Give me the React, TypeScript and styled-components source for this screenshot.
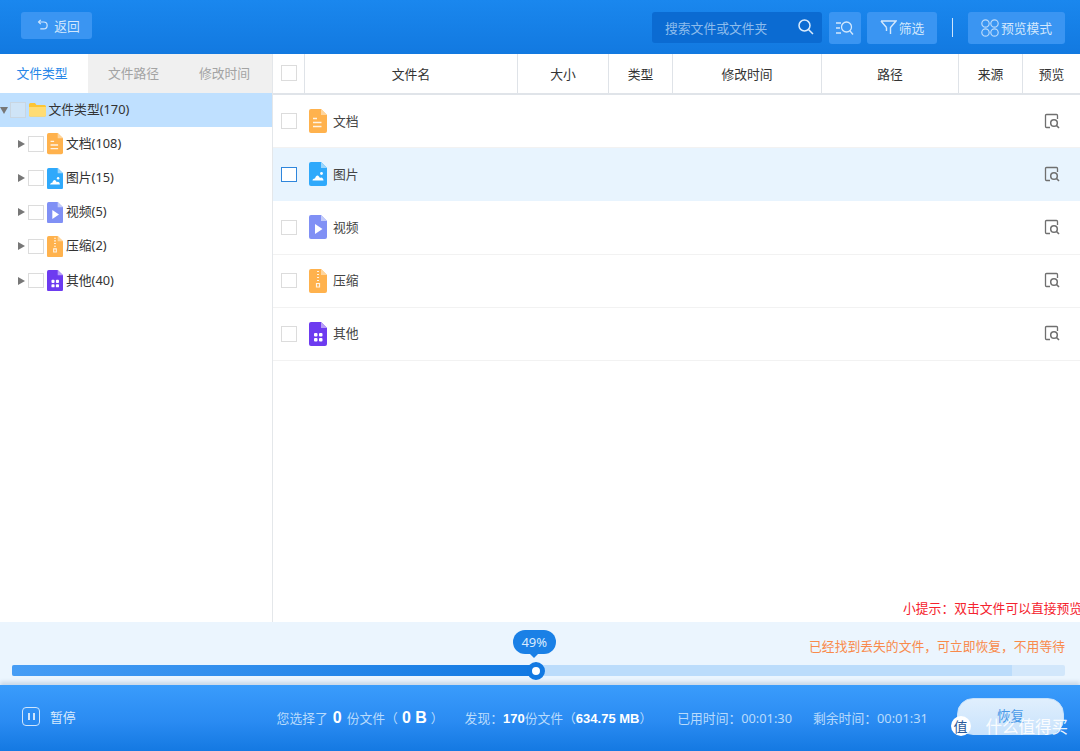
import React from "react"
import styled, { createGlobalStyle } from "styled-components"

const GlobalStyle = createGlobalStyle`
  html, body {
    margin: 0;
    padding: 0;
    background: #fff;
    font-family: "Noto Sans", "Noto Sans CJK SC", sans-serif;
  }
  * { box-sizing: border-box; }
`

type FileKind = "doc" | "image" | "video" | "zip" | "other"

const fileColors: Record<FileKind, [string, string]> = {
  doc: ["#ffb24d", "#ffd59c"],
  image: ["#2fa9fb", "#9ad6fd"],
  video: ["#8090f5", "#c3cbfa"],
  zip: ["#ffb24d", "#ffd59c"],
  other: ["#6d3bf0", "#b79df7"],
}

const FileIcon = ({ kind, size }: { kind: FileKind; size: number }) => {
  const [main, fold] = fileColors[kind]
  return (
    <svg width={size} height={(size * 24) / 18} viewBox="0 0 18 24">
      <path d="M2 0h10l6 6v16a2 2 0 0 1-2 2H2a2 2 0 0 1-2-2V2a2 2 0 0 1 2-2z" fill={main} />
      <path d="M12 0l6 6h-6z" fill={fold} />
      {kind === "doc" && (
        <path d="M4 9.500h4M4 13.500h8.500M4 17.500h8.500" stroke="#fff" strokeWidth="1.500" opacity=".85" />
      )}
      {kind === "image" && (
        <>
          <circle cx="12.500" cy="11.500" r="1.400" fill="#fff" />
          <path d="M3.500 18.500c0-1.500 1.500-2 2.500-2 .5-2 1.500-3 2.500-3s2 1.500 2.500 2.500l1-.5c1.500 0 2.500 1.500 2.500 3z" fill="#fff" />
        </>
      )}
      {kind === "video" && <path d="M6 9l7.500 5L6 19z" fill="#fff" />}
      {kind === "zip" && (
        <path
          d="M8 2.500h2M8 5.500h2M8 8.500h2M8 11.500h2M7.500 14.500h3v3.500h-3z"
          stroke="#fff"
          strokeWidth="1.200"
          fill="none"
          opacity=".85"
        />
      )}
      {kind === "other" && (
        <g fill="#fff">
          <rect x="5" y="11" width="3.500" height="3.500" rx="1" />
          <rect x="10" y="11" width="3.500" height="3.500" rx="1" />
          <rect x="5" y="16" width="3.500" height="3.500" rx="1" />
          <rect x="10" y="16" width="3.500" height="3.500" rx="1" />
        </g>
      )}
    </svg>
  )
}

const FolderIcon = () => (
  <svg width="17" height="14" viewBox="0 0 17 14">
    <path d="M0 1.500A1.500 1.500 0 0 1 1.500 0H6l1.500 2h8A1.500 1.500 0 0 1 17 3.500V12a1.500 1.500 0 0 1-1.500 1.500h-14A1.500 1.500 0 0 1 0 12z" fill="#fdc536" />
    <path d="M0 4h17v8a1.500 1.500 0 0 1-1.500 1.500h-14A1.500 1.500 0 0 1 0 12z" fill="#ffdc74" />
  </svg>
)

const PreviewIcon = () => (
  <svg width="17" height="17" viewBox="0 0 17 17" fill="none" stroke="#6f6f6f">
    <path d="M6 14.500H2.500a1 1 0 0 1-1-1v-11a1 1 0 0 1 1-1h10a1 1 0 0 1 1 1V6" strokeWidth="1.300" />
    <circle cx="10" cy="10" r="3.300" strokeWidth="1.500" />
    <path d="M12.500 12.500l2.500 2.500" strokeWidth="1.600" />
  </svg>
)

const Page = styled.div`
  width: 1080px;
  height: 751px;
  display: flex;
  flex-direction: column;
  overflow: hidden;
  position: relative;
  font-size: 12.8px;
  color: #333;
`

const Header = styled.header`
  height: 54px;
  flex: none;
  display: flex;
  align-items: flex-start;
  padding: 12px 15px 0 21px;
  background: linear-gradient(180deg, #1a87ee 0%, #1279e0 100%);
`

const HeaderButton = styled.button<{ $w: number; $ml?: number }>`
  width: ${(p) => p.$w}px;
  height: 32px;
  margin-left: ${(p) => p.$ml ?? 0}px;
  padding: 0 0 1px;
  flex: none;
  display: flex;
  align-items: center;
  justify-content: center;
  gap: 2px;
  border: none;
  border-radius: 3px;
  background: #3a95f2;
  color: #d3e8fd;
  font: inherit;
`

const BackButton = styled(HeaderButton)`
  height: 27px;
  padding-left: 3px;
  gap: 6px;
`

const SearchBox = styled.div`
  width: 170px;
  height: 31px;
  margin-left: auto;
  padding: 0 7px 1px 13px;
  display: flex;
  align-items: center;
  justify-content: space-between;
  border-radius: 3px;
  background: #0b6bd2;
  color: #8dbcec;
`

const HeaderDivider = styled.div`
  width: 1px;
  height: 19px;
  margin: 6px 15px 0 15px;
  background: #cfe5fb;
`

const Body = styled.div`
  flex: 1;
  min-height: 0;
  display: flex;
`

const Sidebar = styled.aside`
  width: 273px;
  flex: none;
  border-right: 1px solid #e4e7ea;
`

const Tabs = styled.div`
  height: 39px;
  display: flex;
  background: #f0f0f0;
`

const Tab = styled.div<{ $active?: boolean; $w: number; $pr?: number }>`
  width: ${(p) => p.$w}px;
  padding: 0 ${(p) => p.$pr ?? 0}px 2px 0;
  display: flex;
  align-items: center;
  justify-content: center;
  background: ${(p) => (p.$active ? "#fff" : "transparent")};
  color: ${(p) => (p.$active ? "#2586e8" : "#a3a3a3")};
`

const TreeRow = styled.div<{ $root?: boolean }>`
  height: 34.1px;
  display: flex;
  align-items: center;
  padding-left: ${(p) => (p.$root ? 0 : 17.500)}px;
  background: ${(p) => (p.$root ? "#bfe0ff" : "transparent")};
  color: #333;
`

const Caret = styled.span<{ $open?: boolean }>`
  width: 0;
  height: 0;
  flex: none;
  ${(p) =>
    p.$open
      ? `border-left: 4.5px solid transparent;
         border-right: 4.5px solid transparent;
         border-top: 7px solid #777;
         margin-right: 2px;`
      : `border-top: 4.5px solid transparent;
         border-bottom: 4.5px solid transparent;
         border-left: 7px solid #777;
         margin-right: 3.5px;`}
`

const Check = styled.span<{ $blue?: boolean; $mr?: number }>`
  width: 15.500px;
  height: 15.500px;
  margin-right: ${(p) => p.$mr ?? 3.5}px;
  flex: none;
  border: 1.500px solid ${(p) => (p.$blue ? "#2f86dc" : "#dcdcdc")};
  background: #fff;
`

const RootCheck = styled(Check)`
  background: #cfe4f7;
  border-color: #c9d6e2;
`

const TreeLabel = styled.span<{ $ml?: number }>`
  margin: 0 0 3px ${(p) => p.$ml ?? 3}px;
  white-space: nowrap;
`

const Main = styled.main`
  flex: 1;
  min-width: 0;
  display: flex;
  flex-direction: column;
`

const columns = "31px 213px 91px 64px 149px 137px 64px 58px"

const TableHead = styled.div`
  height: 41px;
  flex: none;
  display: grid;
  grid-template-columns: ${columns};
  border-bottom: 2px solid #e0e4e9;
`

const HeadCell = styled.div`
  display: flex;
  align-items: center;
  justify-content: center;
  padding-bottom: 1px;
  border-left: 1px solid #dfe3e8;
  color: #333;
  &:first-child {
    border-left: none;
    justify-content: flex-start;
    padding-left: 8px;
  }
`

const Rows = styled.div`
  flex: 1;
  min-height: 0;
`

const Row = styled.div<{ $hover?: boolean }>`
  height: 53.2px;
  display: flex;
  align-items: center;
  padding-left: 8px;
  border-bottom: 1px solid ${(p) => (p.$hover ? "#e8f4fe" : "#f2f2f2")};
  background: ${(p) => (p.$hover ? "#e8f4fe" : "#fff")};
`

const RowName = styled.span`
  margin: 0 0 2px 6px;
  color: #444;
`

const RowPreview = styled.span`
  margin-left: auto;
  margin-right: 19px;
  display: flex;
`

const Tip = styled.div`
  height: 29px;
  flex: none;
  padding: 5px 0 0 630px;
  color: #f5222d;
  white-space: nowrap;
  overflow: hidden;
`

const Progress = styled.section`
  height: 63px;
  flex: none;
  position: relative;
  padding: 43px 15px 0 12px;
  background: #ebf5fe;
`

const FoundNote = styled.div`
  position: absolute;
  right: 15px;
  top: 14px;
  color: #f98a4b;
  white-space: nowrap;
`

const Track = styled.div`
  position: relative;
  height: 11px;
  border-radius: 2px;
  background: #d2e7fb;
`

const Buffered = styled.div`
  position: absolute;
  left: 0;
  top: 0;
  bottom: 0;
  border-radius: 2px 0 0 2px;
  background: #bbdcfb;
`

const Filled = styled.div`
  position: absolute;
  left: 0;
  top: 0;
  bottom: 0;
  border-radius: 2px 0 0 2px;
  background: linear-gradient(90deg, #469df5 0%, #1279e2 100%);
`

const Thumb = styled.div`
  position: absolute;
  top: 50%;
  width: 18px;
  height: 18px;
  margin: -9px 0 0 -9px;
  border: 5.500px solid #1279e2;
  border-radius: 50%;
  background: #fff;
`

const Bubble = styled.div`
  position: absolute;
  bottom: 22px;
  width: 43px;
  height: 24px;
  margin-left: -21.500px;
  display: flex;
  align-items: center;
  justify-content: center;
  border-radius: 12px;
  background: #1a80e6;
  color: #d8ebff;
  font-size: 13px;
  &::after {
    content: "";
    position: absolute;
    left: 50%;
    bottom: -4px;
    margin-left: -4px;
    border-left: 4px solid transparent;
    border-right: 4px solid transparent;
    border-top: 4px solid #1a80e6;
  }
`

const Footer = styled.footer`
  height: 66px;
  flex: none;
  display: flex;
  align-items: center;
  padding: 0 16px 3px 22px;
  background: linear-gradient(180deg, #3a9cfc 0%, #2a8bf2 55%, #1479e2 100%);
  box-shadow: 0 -3px 4px rgba(80, 110, 150, 0.22);
  position: relative;
  color: #b9dbfc;
`

const PauseBox = styled.span`
  width: 18px;
  height: 19px;
  flex: none;
  display: flex;
  align-items: center;
  justify-content: center;
  gap: 3px;
  border: 1.500px solid #cfe5fc;
  border-radius: 4px;
  &::before,
  &::after {
    content: "";
    width: 2px;
    height: 7px;
    background: #cfe5fc;
  }
`

const PauseLabel = styled.span`
  margin-left: 10px;
  color: #d7eafd;
`

const Stat = styled.span<{ $ml: number }>`
  margin-left: ${(p) => p.$ml}px;
  padding-top: 2px;
  white-space: nowrap;
`

const Strong = styled.b<{ $big?: boolean; $mx?: number }>`
  color: #fff;
  font-family: "Liberation Sans", "Noto Sans CJK SC", sans-serif;
  font-size: ${(p) => (p.$big ? 16 : 13)}px;
  margin: 0 ${(p) => p.$mx ?? 0}px;
`

const RestoreButton = styled.button`
  width: 107px;
  height: 37px;
  margin-left: auto;
  padding: 0 0 4px;
  border: 1px solid #c6e1fb;
  border-radius: 16px;
  background: linear-gradient(180deg, #e0effd 0%, #c8e2fc 100%);
  color: #4a9ae8;
  font: inherit;
  font-size: 13.500px;
`

const Watermark = styled.div`
  position: absolute;
  right: 12px;
  bottom: 13px;
  display: flex;
  align-items: center;
  gap: 15px;
  color: rgba(255, 255, 255, 0.92);
  font-size: 16.500px;
`

const WatermarkBadge = styled.span`
  width: 20px;
  height: 20px;
  display: flex;
  align-items: center;
  justify-content: center;
  border-radius: 50%;
  background: #fff;
  color: #2a5a9a;
  font-size: 14px;
`

const treeItems: { kind: FileKind; name: string; count: number }[] = [
  { kind: "doc", name: "文档", count: 108 },
  { kind: "image", name: "图片", count: 15 },
  { kind: "video", name: "视频", count: 5 },
  { kind: "zip", name: "压缩", count: 2 },
  { kind: "other", name: "其他", count: 40 },
]

const headers = ["文件名", "大小", "类型", "修改时间", "路径", "来源", "预览"]

const App = () => {
  return (
    <Page>
      <GlobalStyle />
      <Header>
        <BackButton $w={71}>
          <svg width="12" height="12" viewBox="0 0 14 14" fill="none" stroke="#d3e8fd" strokeWidth="1.400">
            <path d="M3.500 3.500H9a3.500 3.500 0 0 1 0 8H5" />
            <path d="M5.500 1L3 3.500 5.500 6" />
          </svg>
          返回
        </BackButton>
        <SearchBox>
          搜索文件或文件夹
          <svg width="18" height="18" viewBox="0 0 18 18" fill="none" stroke="#d9ebfd" strokeWidth="1.500">
            <circle cx="7.500" cy="7.500" r="5.500" />
            <path d="M11.500 11.500L16 16" />
          </svg>
        </SearchBox>
        <HeaderButton $w={32} $ml={7}>
          <svg width="18" height="16" viewBox="0 0 18 16" fill="none" stroke="#d3e8fd" strokeWidth="1.300">
            <path d="M0 3h5M0 8h4M0 13h5" />
            <circle cx="10.500" cy="7" r="5" />
            <path d="M14 11l3 3.500" />
          </svg>
        </HeaderButton>
        <HeaderButton $w={70} $ml={6}>
          <svg width="17" height="17" viewBox="0 0 17 17" fill="none" stroke="#d3e8fd" strokeWidth="1.400">
            <path d="M1 2h15l-5.500 6.500V15M6.500 8.500L1 2M6.500 8.500V12" />
          </svg>
          筛选
        </HeaderButton>
        <HeaderDivider />
        <HeaderButton $w={97}>
          <svg width="18" height="18" viewBox="0 0 18 18" fill="none" stroke="#b9dafb" strokeWidth="1.200">
            <circle cx="4.500" cy="4.500" r="3.700" />
            <circle cx="13.500" cy="4.500" r="3.700" />
            <circle cx="4.500" cy="13.500" r="3.700" />
            <circle cx="13.500" cy="13.500" r="3.700" />
          </svg>
          预览模式
        </HeaderButton>
      </Header>
      <Body>
        <Sidebar>
          <Tabs>
            <Tab $active $w={88} $pr={4}>文件类型</Tab>
            <Tab $w={92} $pr={1}>文件路径</Tab>
            <Tab $w={92} $pr={3}>修改时间</Tab>
          </Tabs>
          <TreeRow $root>
            <Caret $open />
            <RootCheck $mr={3} />
            <FolderIcon />
            <TreeLabel $ml={3}>文件类型(170)</TreeLabel>
          </TreeRow>
          {treeItems.map((item) => (
            <TreeRow key={item.kind}>
              <Caret />
              <Check />
              <FileIcon kind={item.kind} size={16} />
              <TreeLabel>
                {item.name}({item.count})
              </TreeLabel>
            </TreeRow>
          ))}
        </Sidebar>
        <Main>
          <TableHead>
            <HeadCell>
              <Check $mr={0} />
            </HeadCell>
            {headers.map((h) => (
              <HeadCell key={h}>{h}</HeadCell>
            ))}
          </TableHead>
          <Rows>
            {treeItems.map((item) => (
              <Row key={item.kind} $hover={item.kind === "image"}>
                <Check $blue={item.kind === "image"} $mr={12.500} />
                <FileIcon kind={item.kind} size={18} />
                <RowName>{item.name}</RowName>
                <RowPreview>
                  <PreviewIcon />
                </RowPreview>
              </Row>
            ))}
          </Rows>
          <Tip>小提示：双击文件可以直接预览</Tip>
        </Main>
      </Body>
      <Progress>
        <FoundNote>已经找到丢失的文件，可立即恢复，不用等待</FoundNote>
        <Track>
          <Buffered style={{ width: "95%" }} />
          <Filled style={{ width: "49.8%" }} />
          <Bubble style={{ left: "49.6%" }}>49%</Bubble>
          <Thumb style={{ left: "49.8%" }} />
        </Track>
      </Progress>
      <Footer>
        <PauseBox />
        <PauseLabel>暂停</PauseLabel>
        <Stat $ml={201}>
          您选择了<Strong $big $mx={5}>0</Strong>份文件（<Strong $big $mx={4}>0 B</Strong>）
        </Stat>
        <Stat $ml={21}>
          发现：<Strong>170</Strong>份文件（<Strong>634.75 MB</Strong>）
        </Stat>
        <Stat $ml={25}>已用时间：00:01:30</Stat>
        <Stat $ml={21}>剩余时间：00:01:31</Stat>
        <RestoreButton>恢复</RestoreButton>
        <Watermark>
          <WatermarkBadge>值</WatermarkBadge>
          什么值得买
        </Watermark>
      </Footer>
    </Page>
  )
}

export default App
